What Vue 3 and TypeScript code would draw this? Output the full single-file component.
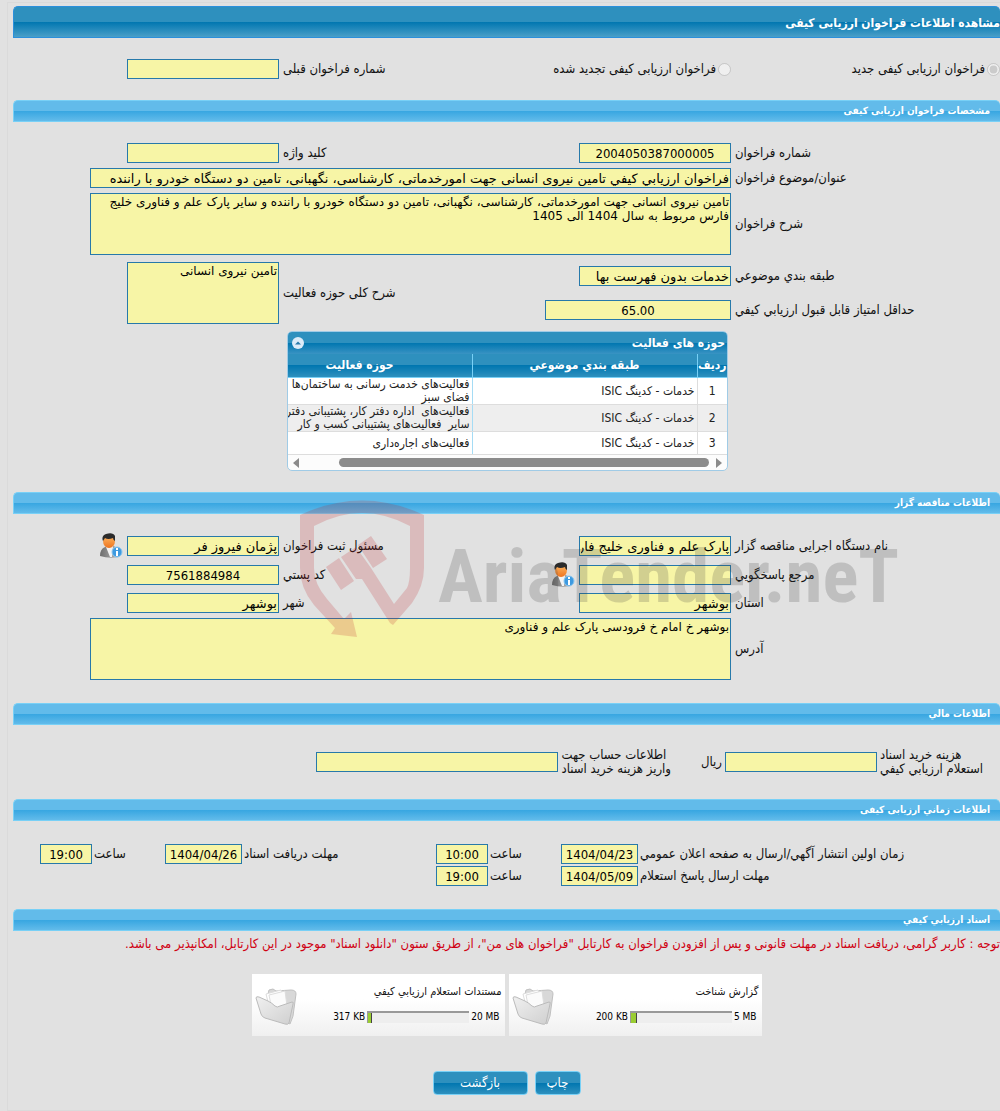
<script setup lang="ts">
interface Activity {
  category: string
  lines: string[]
}

interface DocumentFolder {
  title: string
  used: string
  limit: string
  percent: number
}

const subject =
  'فراخوان ارزیابي کیفي تامین نیروی انسانی جهت امورخدماتی، کارشناسی، نگهبانی، تامین دو دستگاه خودرو با راننده'

const description =
  'تامین نیروی انسانی جهت امورخدماتی، کارشناسی، نگهبانی، تامین دو دستگاه خودرو با راننده و سایر پارک علم و فناوری خلیج فارس مربوط به سال 1404 الی 1405'

const scope = 'تامین نیروی انسانی'
const address = 'بوشهر خ امام خ فرودسی پارک علم و فناوری'

const activities: Activity[] = [
  { category: 'خدمات - کدینگ ISIC', lines: ['فعالیت‌های خدمت رسانی به ساختمان‌ها', 'فضای سبز'] },
  { category: 'خدمات - کدینگ ISIC', lines: ['فعالیت‌های  اداره دفتر کار، پشتیبانی دفتر', 'سایر  فعالیت‌های پشتیبانی کسب و کار'] },
  { category: 'خدمات - کدینگ ISIC', lines: ['فعالیت‌های اجاره‌داری'] },
]

const folders: DocumentFolder[] = [
  { title: 'گزارش شناخت', used: '200 KB', limit: '5 MB', percent: 5 },
  { title: 'مستندات استعلام ارزیابي کیفي', used: '317 KB', limit: '20 MB', percent: 3 },
]
</script>

<template>
  <main class="page" dir="rtl">
    <h1 class="title-bar">مشاهده اطلاعات فراخوان ارزیابی کیفی</h1>

    <div class="form kind">
      <label class="choice"><input type="radio" name="kind" checked disabled />فراخوان ارزیابی کیفی جدید</label>
      <label class="choice renewed"><input type="radio" name="kind" disabled />فراخوان ارزیابی کیفی تجدید شده</label>
      <label class="caption previous" for="previous">شماره فراخوان قبلی</label>
      <input id="previous" class="box" readonly />
    </div>

    <h2 class="section-bar">مشخصات فراخوان ارزیابی کیفی</h2>
    <div class="form details">
      <label class="caption" for="number">شماره فراخوان</label>
      <input id="number" class="box centered" readonly value="2004050387000005" />
      <label class="caption" for="keyword">کلید واژه</label>
      <input id="keyword" class="box" readonly />

      <label class="caption first" for="subject">عنوان/موضوع فراخوان</label>
      <input id="subject" class="box wide" readonly :value="subject" />

      <label class="caption first" for="description">شرح فراخوان</label>
      <textarea id="description" class="box area wide" readonly :value="description"></textarea>
    </div>
    <div class="form grading">
      <label class="caption" for="category">طبقه بندي موضوعي</label>
      <input id="category" class="box" readonly value="خدمات بدون فهرست بها" />
      <label class="caption tall" for="scope">شرح کلی حوزه فعالیت</label>
      <textarea id="scope" class="box area tall" readonly :value="scope"></textarea>
      <label class="caption lower" for="score">حداقل امتیاز قابل قبول ارزیابي کیفي</label>
      <input id="score" class="box centered score" readonly value="65.00" />
    </div>

    <section class="grid-panel">
      <header class="panel-head">
        <h3>حوزه های فعالیت</h3>
        <button class="collapse" type="button" aria-label="بستن">
          <svg viewBox="0 0 12 12" width="12" height="12"><circle cx="6" cy="6" r="6" fill="#dcebf8" /><path d="M3 7.5 6 4.5 9 7.5Z" fill="#2779aa" /></svg>
        </button>
      </header>
      <div class="table-clip">
        <table>
          <colgroup><col class="index" /><col class="wide-col" /><col class="wide-col" /></colgroup>
          <thead>
            <tr><th>ردیف</th><th>طبقه بندي موضوعي</th><th>حوزه فعالیت</th></tr>
          </thead>
          <tbody>
            <tr v-for="(row, i) in activities" :key="i">
              <td>{{ i + 1 }}</td>
              <td>{{ row.category }}</td>
              <td><div v-for="line in row.lines" :key="line">{{ line }}</div></td>
            </tr>
          </tbody>
        </table>
      </div>
      <div class="scroll-track">
        <svg viewBox="0 0 6 10" width="6" height="10"><path d="M0 0 6 5 0 10Z" fill="#8b8b8b" /></svg>
        <span class="thumb"></span>
        <svg viewBox="0 0 6 10" width="6" height="10"><path d="M6 0 0 5 6 10Z" fill="#8b8b8b" /></svg>
      </div>
    </section>

    <h2 class="section-bar owner-bar">اطلاعات مناقصه گزار</h2>
    <div class="owner">
      <div class="form owner-form">
        <label class="caption" for="agency">نام دستگاه اجرایی مناقصه گزار</label>
        <input id="agency" class="box" readonly value="پارک علم و فناوری خلیج فارس" />
        <label class="caption" for="registrar">مسئول ثبت فراخوان</label>
        <input id="registrar" class="box" readonly value="پژمان فیروز فر" />
        <svg class="person" viewBox="0 0 24 26" width="24" height="26"><use href="#person-info" /></svg>

        <label class="caption" for="contact">مرجع پاسخگویي</label>
        <input id="contact" class="box" readonly />
        <div class="with-icon">
          <svg class="person" viewBox="0 0 24 26" width="24" height="26"><use href="#person-info" /></svg>
          <label class="caption" for="postcode">کد پستي</label>
        </div>
        <input id="postcode" class="box centered" readonly value="7561884984" />

        <label class="caption first" for="province">استان</label>
        <input id="province" class="box" readonly value="بوشهر" />
        <label class="caption" for="city">شهر</label>
        <input id="city" class="box" readonly value="بوشهر" />

        <label class="caption first" for="address">آدرس</label>
        <textarea id="address" class="box area wide" readonly :value="address"></textarea>
      </div>

      <svg class="watermark" viewBox="0 0 600 140" width="600" height="140" direction="ltr" aria-hidden="true">
        <g fill="#c0282d">
          <path d="M0 15Q62 -14 124 15V68Q124 86 112 103L93 125 90 123 62 79 56 79 41 57 56 47 71 68 94 104 107 88Q110 82 110 68V26Q62 0 14 26V68Q14 84 27 99L44 119 51 112 57 137 31 134 35 128 14 105Q0 88 0 68Z" />
          <path d="M26 67 39 58 54 81 41 90ZM58 45 71 36 87 59 73 68Z" />
        </g>
        <text x="138" y="102" class="mark-text">AriaTender.neT</text>
      </svg>
    </div>

    <h2 class="section-bar">اطلاعات مالي</h2>
    <div class="finance">
      <label class="caption cost" for="cost">هزینه خرید اسناد<br />استعلام ارزیابي کیفي</label>
      <input id="cost" class="box" readonly />
      <span class="unit">ریال</span>
      <label class="caption" for="account">اطلاعات حساب جهت<br />واریز هزینه خرید اسناد</label>
      <input id="account" class="box account" readonly />
    </div>

    <h2 class="section-bar">اطلاعات زماني ارزیابی کیفی</h2>
    <div class="times">
      <label class="caption" for="publish">زمان اولین انتشار آگهي/ارسال به صفحه اعلان عمومي</label>
      <input id="publish" class="box centered" readonly value="1404/04/23" />
      <label class="caption" for="publish-hour">ساعت</label>
      <input id="publish-hour" class="box centered" readonly value="10:00" />
      <label class="caption" for="receive">مهلت دریافت اسناد</label>
      <input id="receive" class="box centered" readonly value="1404/04/26" />
      <label class="caption" for="receive-hour">ساعت</label>
      <input id="receive-hour" class="box centered" readonly value="19:00" />

      <label class="caption first" for="reply">مهلت ارسال پاسخ استعلام</label>
      <input id="reply" class="box centered" readonly value="1404/05/09" />
      <label class="caption" for="reply-hour">ساعت</label>
      <input id="reply-hour" class="box centered" readonly value="19:00" />
    </div>

    <h2 class="section-bar">اسناد ارزیابي کیفي</h2>
    <p class="notice">توجه : کاربر گرامی، دریافت اسناد در مهلت قانونی و پس از افزودن فراخوان به کارتابل "فراخوان های من"، از طریق ستون "دانلود اسناد" موجود در این کارتابل، امکانپذیر می باشد.</p>

    <div class="folders">
      <article v-for="folder in folders" :key="folder.title" class="folder">
        <div class="folder-info">
          <h3>{{ folder.title }}</h3>
          <div class="usage">
            <span dir="ltr">{{ folder.limit }}</span>
            <span class="meter" dir="ltr"><span class="fill" :style="{ width: folder.percent + '%' }"></span></span>
            <span dir="ltr">{{ folder.used }}</span>
          </div>
        </div>
        <svg class="folder-icon" viewBox="0 0 42 40" width="42" height="40">
          <path d="M13 8 14 4 18 3 21 5 36 4Q41 4 41 8L38 30 35 38 13 24Z" fill="#d8d8d8" stroke="#c0c0c0" />
          <path d="M11 8 26 4 30 14 14 20Z" fill="#fff" stroke="#ddd" />
          <path d="M14 9 30 5 32 20 17 24Z" fill="#fbfbfb" stroke="#ddd" />
          <path d="M1 12Q1 10 4 11L13 15Q17 17 20 20Q22 22 25 20L37 16Q39 16 38 18L34 37Q33 39 30 38L10 32Q7 31 6 28Z" fill="url(#folder-front)" stroke="#bbb" />
        </svg>
      </article>
    </div>

    <div class="actions">
      <button type="button">چاپ</button>
      <button type="button" class="back">بازگشت</button>
    </div>

    <svg class="symbols" width="0" height="0" aria-hidden="true">
      <defs>
        <linearGradient id="folder-front" x1="0" y1="0" x2="1" y2="1"><stop offset="0" stop-color="#f0f0f0" /><stop offset="1" stop-color="#cfcfcf" /></linearGradient>
        <linearGradient id="face" x1="0" y1="0" x2="0" y2="1"><stop offset="0" stop-color="#ffc06a" /><stop offset="1" stop-color="#ee7420" /></linearGradient>
        <linearGradient id="suit" x1="0" y1="0" x2="1" y2="0"><stop offset="0" stop-color="#6d6d6d" /><stop offset="1" stop-color="#b8b8b8" /></linearGradient>
        <symbol id="person-info" viewBox="0 0 24 26">
          <path d="M1 23Q1 16 6 14L10 12 15 13Q20 15 20 24Q10 26 1 23Z" fill="url(#suit)" />
          <path d="M7 14 10 13 14 13 13 24H11Z" fill="#f4f4f4" />
          <ellipse cx="10" cy="8" rx="6" ry="7" fill="url(#face)" />
          <path d="M4 8Q2 3 7 1Q14 -1 16 3L16 8Q14 7 14 5Q9 7 6 5Z" fill="#2b2b2b" />
          <circle cx="18" cy="19" r="5" fill="#3d9ae0" stroke="#8cc7f0" />
          <path d="M17 15H19V17H17ZM17 18H19V23H17Z" fill="#fff" />
        </symbol>
      </defs>
    </svg>
  </main>
</template>

<style>
body {
  margin: 0;
  background: #e1e1e1;
}
</style>

<style scoped>
.page {
  margin: 2px 0 0 7px;
  padding: 3px 0 15px 5px;
  border: solid #dadada;
  border-width: 1px 0 1px 1px;
  color: #111;
  font: 13px/14px "DejaVu Sans Condensed", "DejaVu Sans", sans-serif;
}
input, textarea, button { font: inherit; color: inherit; }
h1, h2, h3, p { margin: 0; }

.title-bar {
  height: 32px;
  box-sizing: border-box;
  border: 1px solid #2b90dc;
  border-right: 0;
  border-radius: 5px 5px 0 0;
  background: linear-gradient(#2e90be 0 50%, #0076b0 50%, #4a9fc8);
  color: #fff;
  font-size: 12px;
  font-weight: bold;
  line-height: 32px;
}
.section-bar {
  height: 22px;
  box-sizing: border-box;
  padding: 0 10px;
  border: 1px solid #78d0f6;
  border-right: 0;
  border-radius: 5px 5px 0 0;
  background: linear-gradient(#62bbea 0 50%, #37a6e1 50%, #62bbea);
  color: #fff;
  font-size: 10px;
  font-weight: bold;
  line-height: 20px;
}

.form {
  display: grid;
  grid-template-columns: 265fr 152px 292fr 152px 110fr;
  column-gap: 4px;
  align-items: center;
}
.caption { text-align: left; white-space: nowrap; }
.first { grid-column: 1; }
.box {
  width: 100%;
  height: 20px;
  box-sizing: border-box;
  margin: 0;
  padding: 0 1px;
  border: 1px solid #2779aa;
  border-radius: 0;
  background: #f7f5a6;
  color: #000;
  font-family: "DejaVu Sans", sans-serif;
  font-size: 13px;
  outline: none;
}
.centered { font-family: "DejaVu Sans Condensed", "DejaVu Sans", sans-serif; text-align: center; }
.area {
  display: block;
  height: 62px;
  padding: 1px;
  font-size: 12px;
  line-height: 14px;
  resize: none;
  overflow: hidden;
}
.wide { grid-column: 2 / 6; width: calc(100% - 77px); }

.kind { padding: 21px 0; }
.choice { display: flex; align-items: center; gap: 2px; white-space: nowrap; }
.choice input { width: 13px; height: 13px; margin: 0; }
.renewed { grid-column: 2 / 4; grid-row: 1; }
.kind .previous { grid-column: 3; grid-row: 1; }

.details { padding-top: 21px; row-gap: 5px; }
.grading { margin-top: 4px; grid-template-rows: 34px 34px; }
.tall { grid-row: 1 / 3; }
.grading .caption.tall { grid-column: 3; }
.grading .area.tall { grid-column: 4; }
.lower { grid-column: 1; grid-row: 2; }
.score { grid-column: 2 / 4; grid-row: 2; width: 186px; }

.grid-panel {
  width: 441px;
  box-sizing: border-box;
  margin: 4px 272px 0 0;
  border: 1px solid #a0cbe6;
  border-radius: 5px;
  background: #fcfcfc;
  overflow: hidden;
}
.panel-head {
  display: flex;
  align-items: center;
  justify-content: space-between;
  height: 22px;
  padding: 0 2px 0 4px;
  background: linear-gradient(#2e90be 0 50%, #0076b0 50%, #3993c3);
  color: #fff;
}
.panel-head h3 { font-size: 12px; line-height: 22px; }
.collapse { display: flex; padding: 0; border: 0; background: none; }
.table-clip { overflow: hidden; }
table {
  width: 480px;
  table-layout: fixed;
  border-collapse: collapse;
  color: #222;
  font-size: 12px;
  line-height: 13px;
}
.index { width: 30px; }
.wide-col { width: 225px; }
th {
  height: 23px;
  padding: 0;
  border: solid #78d0f6;
  border-width: 0 0 1px 1px;
  background: linear-gradient(#2e90be 0 50%, #0076b0 50%, #2e90be);
  color: #fff;
  white-space: nowrap;
}
td {
  height: 26px;
  padding: 0 2px;
  border: solid #ddd;
  border-width: 0 0 1px 1px;
  white-space: pre;
}
td:nth-child(2) { border-left-color: #a5dcf5; }
td:first-child { text-align: center; }
tbody tr { background: #fff; }
tbody tr:nth-child(even) { background: #eee; }
tbody tr:last-child td { height: 22px; }
.scroll-track { display: flex; align-items: center; gap: 7px; height: 15px; padding: 0 5px; }
.thumb { width: 370px; height: 9px; margin-left: auto; border-radius: 5px; background: #8b8b8b; }

.owner-bar { margin-top: 21px; }
.owner { position: relative; }
.owner-form { grid-template-rows: 30px 28px 28px 63px; padding: 17px 0 23px; row-gap: 0; }
.owner-form .area { align-self: end; }
.with-icon { display: flex; align-items: center; justify-content: space-between; }
.person { display: block; }
.watermark {
  position: absolute;
  top: -14px;
  left: 287px;
  opacity: 0.2;
  pointer-events: none;
}
.mark-text {
  fill: #3c3c3c;
  font: bold 75px "Roboto Condensed", Lato, sans-serif;
}

.finance { display: flex; align-items: center; gap: 3px; padding: 23px 0; }
.finance .cost { width: 120px; }
.finance .box { width: 152px; }
.finance .account { width: 242px; }
.unit { width: 48px; }

.times {
  display: grid;
  grid-template-columns: 360fr 77px 69px 52px 190fr 77px 69px 52px 25fr;
  gap: 2px;
  align-items: center;
  padding: 23px 0;
}

.notice { padding-top: 6px; color: #d00012; white-space: nowrap; }
.folders { display: flex; justify-content: center; gap: 4px; margin-top: 23px; }
.folder {
  display: flex;
  width: 253px;
  height: 62px;
  box-sizing: border-box;
  padding: 0 3px;
  background: linear-gradient(#fff 40%, #f0f0f0);
}
.folder-info { flex: 1; padding-top: 11px; }
.folder h3 { font-size: 11px; font-weight: normal; }
.usage { display: flex; align-items: center; gap: 2px; margin-top: 11px; padding-right: 2px; font-size: 10px; color: #000; }
.meter { width: 102px; height: 12px; box-sizing: border-box; border-top: 2px solid #999; border-left: 1px solid #999; background: #eee; }
.fill { display: block; height: 100%; border-right: 1px solid #444; background: #9acd32; }
.folder-icon { margin-top: 12px; }

.actions { display: flex; justify-content: center; gap: 7px; margin-top: 35px; }
.actions button {
  width: 46px;
  height: 24px;
  padding: 0;
  border: 1px solid #78d0f6;
  border-radius: 4px;
  background: linear-gradient(#2e90be 0 50%, #0076b0 50%, #2e90be);
  color: #fff;
}
.actions .back { width: 95px; }
.symbols { position: absolute; }
</style>
